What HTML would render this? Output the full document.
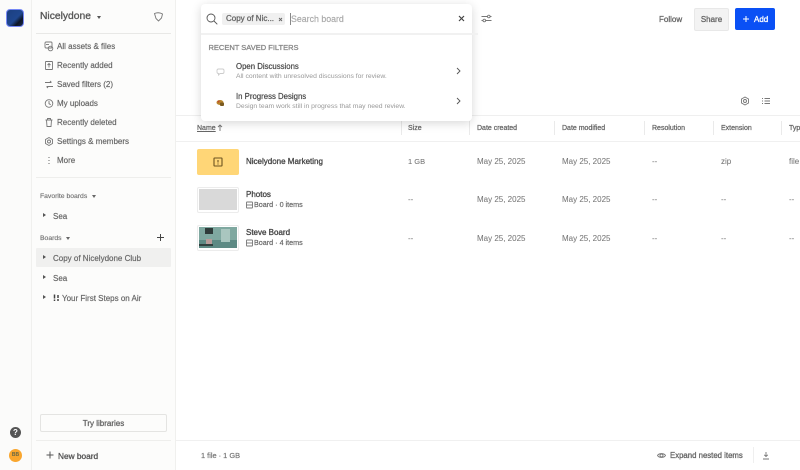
<!DOCTYPE html>
<html><head><meta charset="utf-8"><style>
html,body{margin:0;padding:0;width:800px;height:470px;overflow:hidden;background:#fff}
body{font-family:"Liberation Sans",sans-serif;color:#444;position:relative}
.t{position:absolute;white-space:nowrap;line-height:12px;font-size:8px;color:#666;-webkit-text-stroke:.18px;margin-top:1px}
.t.m{-webkit-text-stroke:.3px}
.z{margin-top:0}
.b{position:absolute}
svg{position:absolute;fill:none;stroke:#777;stroke-width:.9}
.t.h{color:#666;font-size:7px;-webkit-text-stroke:.25px}
.v{width:1px;height:14px;top:121px;background:#eaeaea;position:absolute}
.t.c{color:#777;font-size:8px;-webkit-text-stroke:.05px}
.tri{position:absolute;width:0;height:0;border-left:3px solid #555;border-top:2.5px solid transparent;border-bottom:2.5px solid transparent}
.dn{position:absolute;width:0;height:0;border-top:3px solid #666;border-left:2.5px solid transparent;border-right:2.5px solid transparent}
</style></head><body>
<div class="b" style="left:0;top:0;width:31px;height:470px;background:#fbfbfa;border-right:1px solid #f0f0ee"></div>
<div class="b" style="left:32px;top:0;width:143px;height:470px;background:#fcfcfb;border-right:1px solid #f0f0ee"></div>

<div class="b" style="left:6px;top:9px;width:16px;height:16px;border:1.5px solid #7688f5;border-radius:4px;background:linear-gradient(135deg,#1c3f80 0,#1f478f 55%,#0e1626 75%,#1a2a50 100%)"></div>

<div class="t m z" style="left:40px;top:11px;font-size:10.300px;color:#555">Nicelydone</div>
<div class="dn" style="left:97px;top:16px;border-top-color:#555"></div>
<svg style="left:153px;top:11px" width="11" height="12" viewBox="0 0 11 12"><path d="M1.500 2.500C4 1.500 7 1.500 9.500 3L8.500 7L5.500 10L3 7.500Z"/></svg>
<div class="b" style="left:36px;top:33px;width:135px;height:1px;background:#e8e8e6"></div>

<div class="t" style="left:57px;top:40px">All assets &amp; files</div>
<div class="t" style="left:57px;top:59px">Recently added</div>
<div class="t" style="left:57px;top:78px">Saved filters (2)</div>
<div class="t" style="left:57px;top:97px">My uploads</div>
<div class="t" style="left:57px;top:116px">Recently deleted</div>
<div class="t" style="left:57px;top:135px">Settings &amp; members</div>
<div class="t" style="left:57px;top:154px">More</div>

<svg style="left:44px;top:41px" width="10" height="11" viewBox="0 0 10 11"><rect x="1" y="1" width="7" height="6" rx="1"/><circle cx="6.500" cy="7.500" r="2.300"/><path d="M2 3.500h3"/></svg>
<svg style="left:44px;top:60px" width="10" height="11" viewBox="0 0 10 11"><rect x="1.500" y="1.500" width="7" height="8" rx=".5"/><path d="M5 7.500V3.500M3.500 5L5 3.500L6.500 5"/></svg>
<svg style="left:44px;top:79px" width="10" height="11" viewBox="0 0 10 11"><path d="M1 3.500h6M6 2l1.500 1.500M9 7.500H3M4 9L2.500 7.500"/></svg>
<svg style="left:44px;top:98px" width="10" height="11" viewBox="0 0 10 11"><circle cx="5" cy="5.500" r="3.800"/><path d="M5 3v2.700l1.700 1"/></svg>
<svg style="left:44px;top:117px" width="10" height="11" viewBox="0 0 10 11"><path d="M1.500 3h7M2.500 3l.5 6.500h4l.5-6.500M3.500 3V1.500h3V3"/></svg>
<svg style="left:44px;top:136px" width="10" height="11" viewBox="0 0 10 11"><circle cx="5" cy="5.500" r="1.500"/><path d="M5 1.500l3.500 2v4L5 9.500l-3.500-2v-4z"/></svg>
<svg style="left:44px;top:155px" width="10" height="11" viewBox="0 0 10 11"><path d="M5 2v1M5 5v1M5 8v1" stroke-width="1.100"/></svg>

<div class="b" style="left:36px;top:177px;width:135px;height:1px;background:#eeeeec"></div>
<div class="t" style="left:40px;top:190px;font-size:6.800px;color:#777">Favorite boards</div>
<div class="dn" style="left:92px;top:195px"></div>
<div class="tri" style="left:43px;top:213px"></div>
<div class="t" style="left:53px;top:210px">Sea</div>
<div class="t" style="left:40px;top:232px;font-size:6.800px;color:#777">Boards</div>
<div class="dn" style="left:66px;top:237px"></div>
<svg style="left:156px;top:233px" width="9" height="9" viewBox="0 0 9 9"><path d="M4.500 1v7M1 4.500h7" stroke="#444" stroke-width="1"/></svg>

<div class="b" style="left:36px;top:248px;width:135px;height:19px;background:#f0f0ef;border-radius:1px"></div>
<div class="tri" style="left:43px;top:255px"></div>
<div class="t" style="left:53px;top:252px">Copy of Nicelydone Club</div>
<div class="tri" style="left:43px;top:275px"></div>
<div class="t" style="left:53px;top:272px">Sea</div>
<div class="tri" style="left:43px;top:295px"></div>
<svg style="left:52px;top:293px" width="9" height="10" viewBox="0 0 9 10"><path d="M2.500 1.500v4M6 2v3M2.500 6.500v1.500M6 6v2" stroke="#444" stroke-width="1.500"/></svg>
<div class="t" style="left:62px;top:292px">Your First Steps on Air</div>

<div class="b" style="left:40px;top:414px;width:125px;height:16px;border:1px solid #e4e4e2;border-radius:2px;background:#fcfcfb"></div>
<div class="t m" style="left:40px;top:417px;width:127px;text-align:center;color:#666">Try libraries</div>
<div class="b" style="left:36px;top:440px;width:135px;height:1px;background:#eeeeec"></div>
<svg style="left:46px;top:451px" width="8" height="8" viewBox="0 0 8 8"><path d="M4 .5v7M.5 4h7" stroke="#555" stroke-width="1"/></svg>
<div class="t m" style="left:58px;top:449px;color:#555;font-size:8.300px">New board</div>

<div class="b" style="left:10px;top:427px;width:11px;height:11px;border-radius:50%;background:#555;color:#fff;font-size:8px;font-weight:bold;line-height:11px;text-align:center">?</div>
<div class="b" style="left:9px;top:449px;width:13px;height:13px;border-radius:50%;background:#f9a62e;color:#664;font-size:5px;font-weight:bold;line-height:13px;text-align:center">BB</div>

<!-- top right -->
<svg style="left:481px;top:13px" width="11" height="11" viewBox="0 0 11 11"><path d="M.5 3.500h6M9 3.500h1.500M.5 7.500h1.500M5 7.500h5.500"/><circle cx="7.800" cy="3.500" r="1.300"/><circle cx="3.300" cy="7.500" r="1.300"/></svg>
<div class="t m" style="left:659px;top:13px">Follow</div>
<div class="b" style="left:694px;top:8px;width:33px;height:21px;background:#f3f3f3;border:1px solid #e8e8e8;border-radius:2px"></div>
<div class="t m" style="left:694px;top:13px;width:35px;text-align:center">Share</div>
<div class="b" style="left:735px;top:8px;width:40px;height:22px;background:#0a50f5;border-radius:2px"></div>
<svg style="left:742px;top:15px" width="8" height="8" viewBox="0 0 8 8"><path d="M4 1v6M1 4h6" stroke="#fff" stroke-width="1"/></svg>
<div class="t m" style="left:754px;top:13px;color:#fff">Add</div>

<svg style="left:740px;top:96px" width="10" height="10" viewBox="0 0 10 10"><circle cx="5" cy="5" r="1.500"/><path d="M5 1l3.500 2v4L5 9 1.500 7V3z"/></svg>
<svg style="left:761px;top:96px" width="10" height="10" viewBox="0 0 10 10"><path d="M3.500 2.500H9M3.500 5H9M3.500 7.500H9M1 2.500h1M1 5h1M1 7.500h1"/></svg>

<!-- table -->
<div class="b" style="left:176px;top:115px;width:624px;height:1px;background:#efefef"></div>
<div class="b" style="left:176px;top:141px;width:624px;height:1px;background:#f0f0f0"></div>
<div class="t h" style="left:197px;top:122px;text-decoration:underline">Name</div>
<svg style="left:217px;top:124px" width="6" height="8" viewBox="0 0 6 8"><path d="M3 7V1M1 3l2-2 2 2"/></svg>
<div class="v" style="left:401px"></div><div class="t h" style="left:408px;top:122px">Size</div>
<div class="v" style="left:469px"></div><div class="t h" style="left:477px;top:122px">Date created</div>
<div class="v" style="left:554px"></div><div class="t h" style="left:562px;top:122px">Date modified</div>
<div class="v" style="left:644px"></div><div class="t h" style="left:652px;top:122px">Resolution</div>
<div class="v" style="left:713px"></div><div class="t h" style="left:721px;top:122px">Extension</div>
<div class="v" style="left:781px"></div><div class="t h" style="left:789px;top:122px">Type</div>

<div class="b" style="left:197px;top:149px;width:42px;height:26px;background:#ffd677;border-radius:2px"></div>
<svg style="left:213px;top:157px" width="10" height="10" viewBox="0 0 10 10"><rect x="1" y="1" width="8" height="8" rx=".5" stroke="#6b5220" stroke-width="1.100"/><path d="M5 3v2.500M5 6.500v1" stroke="#6b5220" stroke-width="1.100"/></svg>
<div class="t m" style="left:246px;top:155px;color:#444">Nicelydone Marketing</div>
<div class="t c" style="left:408px;top:155px;font-size:7.500px">1 GB</div>
<div class="t c" style="left:477px;top:155px">May 25, 2025</div>
<div class="t c" style="left:562px;top:155px">May 25, 2025</div>
<div class="t c" style="left:652px;top:155px">--</div>
<div class="t c" style="left:721px;top:155px">zip</div>
<div class="t c" style="left:789px;top:155px">file</div>

<div class="b" style="left:197px;top:187px;width:40px;height:24px;border:1px solid #ececec;border-radius:2px;background:#fff"></div>
<div class="b" style="left:199px;top:189px;width:38px;height:21px;background:#d9d9d9"></div>
<div class="t m" style="left:246px;top:188px;color:#444">Photos</div>
<svg style="left:246px;top:201px" width="7" height="8" viewBox="0 0 7 8"><rect x=".5" y="1" width="6" height="6" rx=".5"/><path d="M.5 4h6"/></svg>
<div class="t z" style="left:254px;top:199px;font-size:7.200px">Board · 0 items</div>
<div class="t c" style="left:408px;top:193px">--</div>
<div class="t c" style="left:477px;top:193px">May 25, 2025</div>
<div class="t c" style="left:562px;top:193px">May 25, 2025</div>
<div class="t c" style="left:652px;top:193px">--</div>
<div class="t c" style="left:721px;top:193px">--</div>
<div class="t c" style="left:789px;top:193px">--</div>

<div class="b" style="left:197px;top:225px;width:40px;height:24px;border:1px solid #ececec;border-radius:2px;background:#fff"></div>
<svg style="left:199px;top:227px;stroke:none" width="38" height="21" viewBox="0 0 38 21"><rect width="38" height="21" fill="#7fa8a0"/><rect y="13" width="38" height="8" fill="#5d8a84"/><rect x="6" y="1" width="8" height="6" fill="#2f3b3a"/><rect x="22" y="2" width="9" height="13" fill="#a9c6bf"/><rect x="7" y="12" width="6" height="5" fill="#b89c9a"/><rect x="0" y="17" width="14" height="2" fill="#31413f"/></svg>
<div class="t m" style="left:246px;top:226px;color:#444">Steve Board</div>
<svg style="left:246px;top:239px" width="7" height="8" viewBox="0 0 7 8"><rect x=".5" y="1" width="6" height="6" rx=".5"/><path d="M.5 4h6"/></svg>
<div class="t z" style="left:254px;top:237px;font-size:7.200px">Board · 4 items</div>
<div class="t c" style="left:408px;top:232px">--</div>
<div class="t c" style="left:477px;top:232px">May 25, 2025</div>
<div class="t c" style="left:562px;top:232px">May 25, 2025</div>
<div class="t c" style="left:652px;top:232px">--</div>
<div class="t c" style="left:721px;top:232px">--</div>
<div class="t c" style="left:789px;top:232px">--</div>

<!-- footer -->
<div class="b" style="left:176px;top:440px;width:624px;height:1px;background:#f0f0f0"></div>
<div class="t" style="left:201px;top:449px;color:#777;font-size:7.400px">1 file · 1 GB</div>
<svg style="left:657px;top:451px" width="9" height="9" viewBox="0 0 9 9"><circle cx="4.500" cy="4.500" r="1.500"/><path d="M.5 4.500C2 2 7 2 8.500 4.500C7 7 2 7 .5 4.500z"/></svg>
<div class="t m" style="left:670px;top:449px;font-size:7.800px">Expand nested items</div>
<div class="b" style="left:753px;top:447px;width:1px;height:16px;background:#efefef"></div>
<svg style="left:762px;top:451px" width="8" height="9" viewBox="0 0 8 9"><path d="M4 1v4.500M2.200 3.800L4 5.500l1.800-1.700M1 8h6"/></svg>

<!-- search popup -->
<div class="b" style="left:201px;top:4px;width:271px;height:117px;background:#fff;border-radius:4px;box-shadow:0 2px 10px rgba(0,0,0,.16)"></div>
<div class="b" style="left:201px;top:33px;width:277px;height:2px;background:#f1f1f1"></div>
<svg style="left:206px;top:13px" width="12" height="12" viewBox="0 0 12 12"><circle cx="5" cy="5" r="4" stroke="#555"/><path d="M8 8l3.300 3.300" stroke="#555"/></svg>
<div class="b" style="left:222px;top:13px;width:63px;height:12px;background:#f0f0f0;border-radius:2px"></div>
<div class="t m z" style="left:226px;top:13px">Copy of Nic...</div>
<svg style="left:278px;top:17px" width="5" height="5" viewBox="0 0 5 5"><path d="M1 1l3 3M4 1L1 4" stroke="#666"/></svg>
<div class="b" style="left:290px;top:13px;width:1px;height:12px;background:#888"></div>
<div class="t z" style="left:291px;top:13px;color:#aaa;font-size:8.800px">Search board</div>
<svg style="left:458px;top:15px" width="7" height="7" viewBox="0 0 7 7"><path d="M1 1l5 5M6 1L1 6" stroke="#444" stroke-width="1.200"/></svg>

<div class="t m z" style="left:208.500px;top:42px;color:#888;font-size:7.500px">RECENT SAVED FILTERS</div>
<svg style="left:216px;top:68px" width="9" height="9" viewBox="0 0 9 9"><path d="M1 2.500Q1 1 2.500 1h4Q8 1 8 2.500v1.500Q8 5.500 6.500 5.500H4L2.500 7V5.500Q1 5.500 1 4z" stroke="#ccc"/></svg>
<div class="t" style="left:236px;top:60px;color:#444;font-size:7.800px">Open Discussions</div>
<div class="t" style="left:236px;top:70px;color:#999;font-size:6.800px;-webkit-text-stroke:0">All content with unresolved discussions for review.</div>
<svg style="left:456px;top:67px" width="5" height="8" viewBox="0 0 5 8"><path d="M1 1l3 3-3 3" stroke="#555"/></svg>
<svg style="left:216px;top:99px;stroke:none" width="9" height="8" viewBox="0 0 9 8"><ellipse cx="4" cy="3.500" rx="3.500" ry="2.500" fill="#b8842c"/><rect x="4" y="3.500" width="4" height="3.500" rx="1" fill="#7a5a20"/><circle cx="2.500" cy="2.500" r="1" fill="#c0492a"/></svg>
<div class="t" style="left:236px;top:90px;color:#444;font-size:7.800px">In Progress Designs</div>
<div class="t" style="left:236px;top:100px;color:#999;font-size:6.800px;-webkit-text-stroke:0">Design team work still in progress that may need review.</div>
<svg style="left:456px;top:97px" width="5" height="8" viewBox="0 0 5 8"><path d="M1 1l3 3-3 3" stroke="#555"/></svg>
</body></html>
